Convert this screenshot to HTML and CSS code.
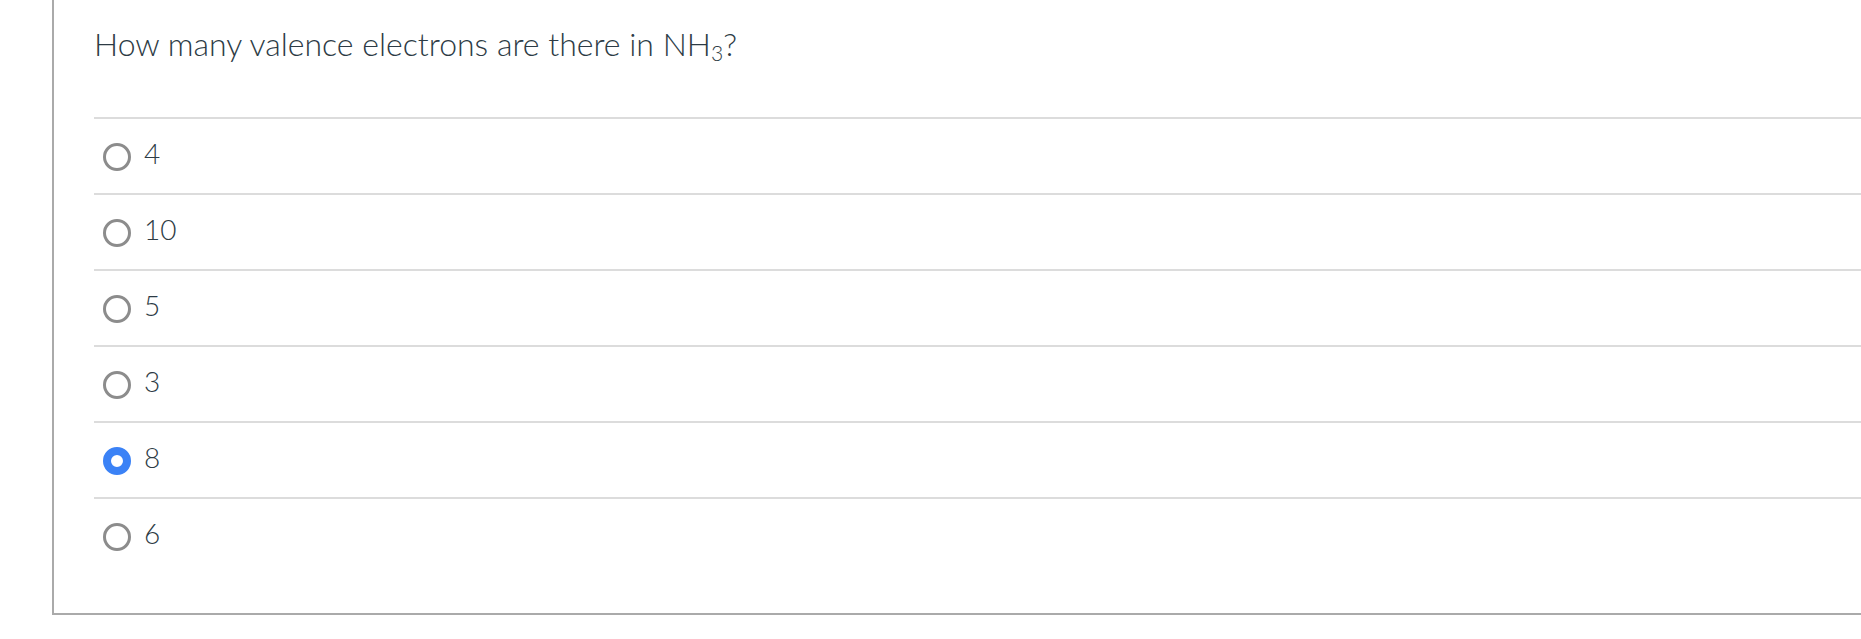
FILE: index.html
```html
<!DOCTYPE html>
<html lang="en">
<head>
<meta charset="utf-8">
<title>Question</title>
<link rel="stylesheet" href="styles.css">
</head>
<body>
<div class="frame">
  <div class="question">How many valence electrons are there in NH<sub class="sub">3</sub>?</div>
  <ul class="answers">
    <li class="answer"><span class="radio"></span><span class="label">4</span></li>
    <li class="answer"><span class="radio"></span><span class="label">10</span></li>
    <li class="answer"><span class="radio"></span><span class="label">5</span></li>
    <li class="answer"><span class="radio"></span><span class="label">3</span></li>
    <li class="answer"><span class="radio radio-checked"></span><span class="label">8</span></li>
    <li class="answer"><span class="radio"></span><span class="label">6</span></li>
  </ul>
</div>
</body>
</html>
```

FILE: styles.css
```css
html, body {
  margin: 0;
  padding: 0;
  background: #ffffff;
  overflow: hidden;
}

body {
  font-family: Lato, "Open Sans", sans-serif;
  font-weight: 300;
  color: #2d3b45;
}

.frame {
  margin-left: 52px;
  margin-right: -200px;
  border-left: 2px solid #aaaaaa;
  border-bottom: 2px solid #aaaaaa;
  padding: 25px 0 40px 40px;
}

.question {
  font-size: 32px;
  line-height: 38px;
  margin-bottom: 54px;
}

.sub {
  font-size: 0.66em;
  vertical-align: -0.24em;
  line-height: 0;
}

.answers {
  list-style: none;
  margin: 0;
  padding: 0;
}

.answer {
  display: flex;
  align-items: center;
  gap: 13px;
  height: 74px;
  border-top: 2px solid #dcdcdc;
  padding-left: 9px;
  font-size: 28px;
}

.radio {
  box-sizing: border-box;
  width: 28px;
  height: 28px;
  border-radius: 50%;
  border: 3px solid #8c8c8c;
  background: #ffffff;
  flex: none;
  margin-top: 2px;
}

.radio-checked {
  border: 8px solid #3b82f6;
}

.label {
  line-height: 1;
  margin-bottom: 6px;
}
```
